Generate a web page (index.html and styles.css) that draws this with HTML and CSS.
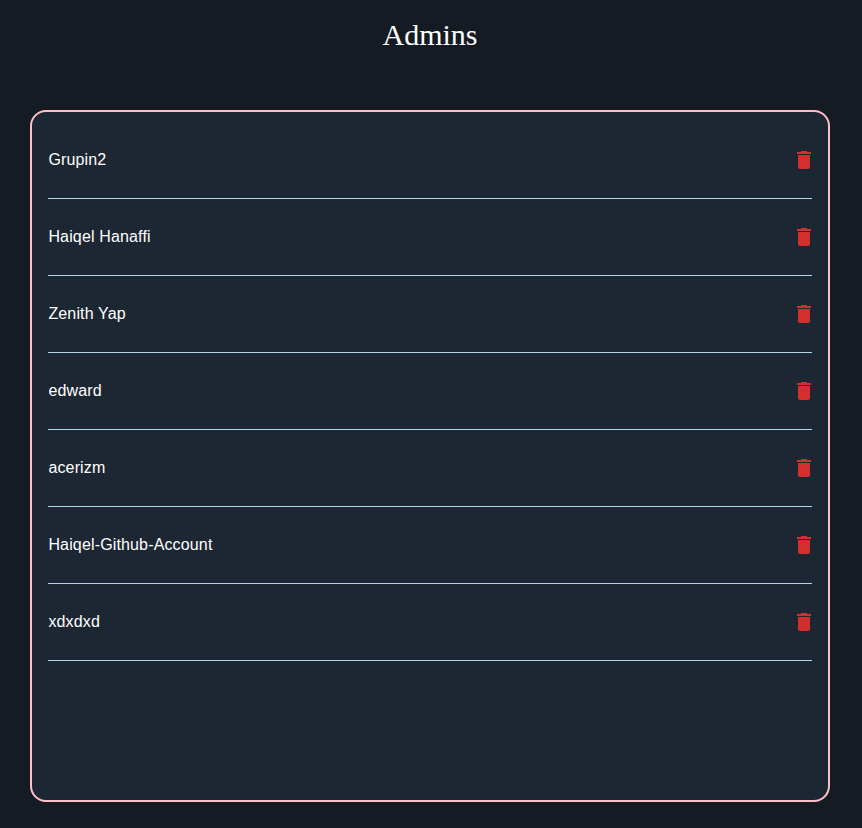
FILE: index.html
```html
<!DOCTYPE html>
<html lang="en">
<head>
<meta charset="utf-8">
<title>Admins</title>
<link rel="stylesheet" href="styles.css">
</head>
<body>
<svg class="sprite" aria-hidden="true"><symbol id="trash" viewBox="0 0 24 24"><path d="M6 19c0 1.1.9 2 2 2h8c1.1 0 2-.9 2-2V7H6v12zM19 4h-3.5l-1-1h-5l-1 1H5v2h14V4z"/></symbol></svg>
<h1 class="title">Admins</h1>
<ul class="panel">
<li class="row"><span>Grupin2</span><svg class="icon"><use href="#trash"/></svg></li>
<li class="row"><span>Haiqel Hanaffi</span><svg class="icon"><use href="#trash"/></svg></li>
<li class="row"><span>Zenith Yap</span><svg class="icon"><use href="#trash"/></svg></li>
<li class="row"><span>edward</span><svg class="icon"><use href="#trash"/></svg></li>
<li class="row"><span>acerizm</span><svg class="icon"><use href="#trash"/></svg></li>
<li class="row"><span>Haiqel-Github-Account</span><svg class="icon"><use href="#trash"/></svg></li>
<li class="row"><span>xdxdxd</span><svg class="icon"><use href="#trash"/></svg></li>
</ul>
</body>
</html>
```
FILE: styles.css
```css
* { box-sizing: border-box; }
body {
  margin: 0;
  min-height: 828px;
  background: #141b23;
  color: #fff;
  font: 16px "Liberation Sans", Arial, sans-serif;
}
.sprite { display: none; }
.title {
  width: 860px;
  margin: 0;
  padding-top: 18px;
  height: 110px;
  text-align: center;
  font: 400 30px/34px "Liberation Serif", "Times New Roman", serif;
}
.panel {
  width: 800px;
  height: 692px;
  margin: 0 0 0 30px;
  padding: 10px 16px;
  list-style: none;
  background: #1c2733;
  border: 2px solid pink;
  border-radius: 16px;
}
.row {
  display: flex;
  align-items: center;
  justify-content: space-between;
  height: 77px;
  padding-left: 0.4px;
  letter-spacing: 0.00938em;
  border-bottom: 1px solid lightblue;
}
.icon {
  width: 24px;
  height: 24px;
  margin-right: -4px;
  fill: #d32f2f;
}
```
